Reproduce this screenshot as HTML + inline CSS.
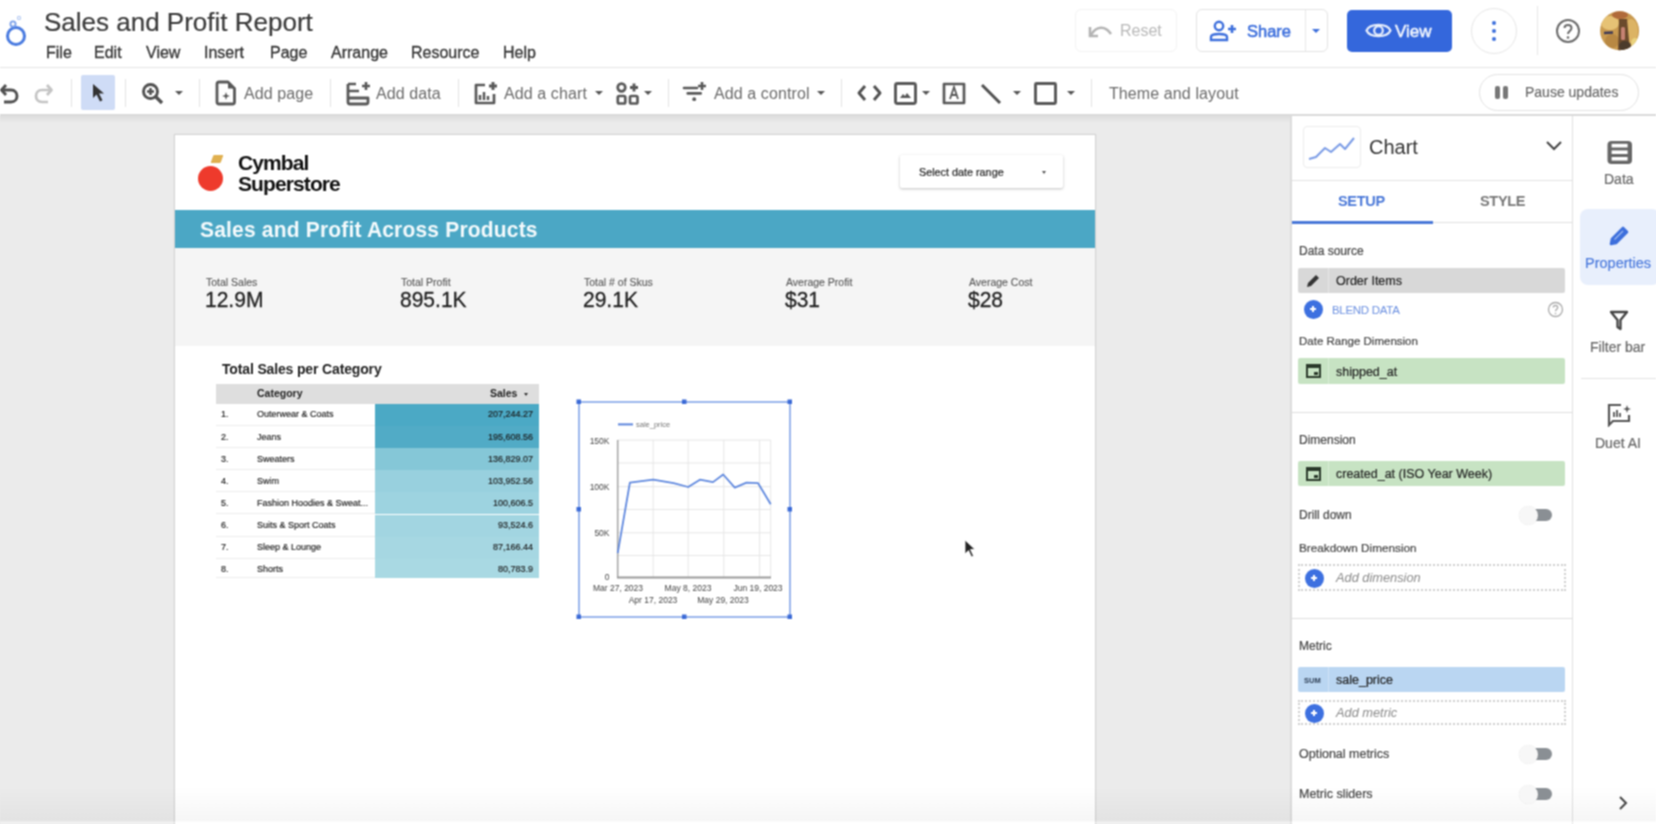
<!DOCTYPE html>
<html><head><meta charset="utf-8">
<style>
*{box-sizing:border-box;margin:0;padding:0}
html,body{width:1656px;height:824px;overflow:hidden;background:#fff;font-family:"Liberation Sans",sans-serif;color:#3c4043}
.a{position:absolute;white-space:nowrap}
#hdr{position:absolute;left:0;top:0;width:1656px;height:68px;background:#fff;border-bottom:1px solid #e4e4e4}
#tb{position:absolute;left:0;top:68px;width:1656px;height:48px;background:#fff;border-bottom:2px solid #dadada}
#canvas{position:absolute;left:-20px;top:116px;width:1310px;height:740px;background:#ebebeb}
#page{position:absolute;left:175px;top:135px;width:920px;height:700px;background:#fff;box-shadow:0 0 1px 1px rgba(0,0,0,.1)}
#panel{position:absolute;left:1290px;top:116px;width:283px;height:740px;background:#fff;border-left:2px solid #dcdcdc;border-right:1px solid #e0e0e0}
#rail{position:absolute;left:1573px;top:116px;width:103px;height:740px;background:#fff}
.menu{font-size:16px;color:#333;top:44px;-webkit-text-stroke:0.3px #333}
.tbt{font-size:16px;color:#6a6a6a;top:85px;letter-spacing:0.1px}
.sl{font-size:10.5px;color:#555;top:275.5px;-webkit-text-stroke:0.1px #555}
.sv{font-size:22px;color:#222;top:287.3px;transform:scaleX(0.955);transform-origin:0 0;-webkit-text-stroke:0.3px #222}
.tr{font-size:9px;color:#1a1a1a;-webkit-text-stroke:0.15px #1a1a1a}
.pl{color:#444;-webkit-text-stroke:0.2px #444}
.pv{font-size:12.5px;color:#1f1f1f;-webkit-text-stroke:0.2px #1f1f1f}
.rl{font-size:14px;color:#666;-webkit-text-stroke:0.2px #666}
.sep{position:absolute;width:1px;background:#e3e3e3;top:79px;height:28px}
</style></head><body><svg width="0" height="0" style="position:absolute"><filter id="sb" color-interpolation-filters="sRGB" x="-1%" y="-1%" width="102%" height="102%"><feConvolveMatrix order="3" kernelMatrix="1 2 1 2 4 2 1 2 1" divisor="16" edgeMode="duplicate"/></filter></svg><div id="root" style="position:absolute;left:-20px;top:-20px;width:1696px;height:864px;filter:url(#sb)"><div style="position:absolute;left:20px;top:20px;width:1656px;height:824px">
<div id="hdr"></div>
<div id="tb"></div>
<div id="canvas"></div>
<div id="page"></div>
<div id="panel"></div>
<div class="a" style="left:0;top:116px;width:1290px;height:7px;background:linear-gradient(rgba(0,0,0,.06),rgba(0,0,0,0))"></div>
<div id="rail"></div>
<div class="a" style="left:0;top:786px;width:1656px;height:38px;background:linear-gradient(rgba(0,0,0,0),rgba(0,0,0,.035) 90%,rgba(255,255,255,.3) 96%)"></div>

<!-- header -->
<div class="a" style="left:44px;top:7px;font-size:26px;color:#3a3a3a;-webkit-text-stroke:0.2px #3a3a3a">Sales and Profit Report</div>
<div class="a menu" style="left:46px">File</div>
<div class="a menu" style="left:94px">Edit</div>
<div class="a menu" style="left:146px">View</div>
<div class="a menu" style="left:204px">Insert</div>
<div class="a menu" style="left:270px">Page</div>
<div class="a menu" style="left:331px">Arrange</div>
<div class="a menu" style="left:411px">Resource</div>
<div class="a menu" style="left:503px">Help</div>


<!-- logo -->
<svg class="a" style="left:4px;top:14px" width="26" height="36" viewBox="0 0 26 36">
 <circle cx="12" cy="22" r="8.5" fill="none" stroke="#4a7be0" stroke-width="3"/>
 <circle cx="9" cy="10" r="2.6" fill="none" stroke="#7aa0ea" stroke-width="1.8"/>
 <circle cx="15" cy="4" r="1.6" fill="none" stroke="#b9cdf2" stroke-width="1.2"/>
</svg>
<!-- reset -->
<div class="a" style="left:1075px;top:9px;width:102px;height:43px;border:1px solid #f3f3f3;border-radius:6px"></div>
<svg class="a" style="left:1088px;top:22px" width="26" height="16" viewBox="0 0 26 16">
 <path d="M3 13 C8 4 17 3 23 12" fill="none" stroke="#b4b4b4" stroke-width="2.6"/>
 <path d="M2 5 L2 14 L10 14" fill="none" stroke="#b4b4b4" stroke-width="2.6"/>
</svg>
<div class="a" style="left:1120px;top:22px;font-size:16px;color:#b8b8b8">Reset</div>
<!-- share -->
<div class="a" style="left:1196px;top:9px;width:132px;height:43px;border:1px solid #e3e3e3;border-radius:6px"></div>
<div class="a" style="left:1305px;top:10px;width:1px;height:41px;background:#e8e8e8"></div>
<svg class="a" style="left:1209px;top:20px" width="28" height="22" viewBox="0 0 28 22">
 <circle cx="10" cy="6" r="4.2" fill="none" stroke="#3d6fdc" stroke-width="2.4"/>
 <path d="M2 20 L2 17 C2 13 18 13 18 17 L18 20 Z" fill="none" stroke="#3d6fdc" stroke-width="2.4"/>
 <path d="M19 9 H27 M23 5 V13" stroke="#3d6fdc" stroke-width="2.6"/>
</svg>
<div class="a" style="left:1247px;top:22px;font-size:16.5px;color:#3d6fdc;-webkit-text-stroke:0.55px #3d6fdc">Share</div>
<div class="a" style="left:1312px;top:29px;width:0;height:0;border-left:4px solid transparent;border-right:4px solid transparent;border-top:4px solid #3d6fdc"></div>
<!-- view -->
<div class="a" style="left:1347px;top:10px;width:105px;height:42px;background:#3467dc;border-radius:5px"></div>
<svg class="a" style="left:1365px;top:20px" width="27" height="21" viewBox="0 0 27 21">
 <path d="M1.5 10.5 C5 3 22 3 25.5 10.5 C22 18 5 18 1.5 10.5 Z" fill="none" stroke="#e6edfb" stroke-width="2.2"/>
 <circle cx="13.5" cy="10.5" r="4.3" fill="none" stroke="#e6edfb" stroke-width="2.2"/>
</svg>
<div class="a" style="left:1395px;top:22px;font-size:17px;color:#eef3fd;-webkit-text-stroke:0.55px #eef3fd">View</div>
<!-- more -->
<div class="a" style="left:1471px;top:8px;width:46px;height:46px;border:1px solid #e6e6e6;border-radius:50%"></div>
<div class="a" style="left:1492px;top:21px;width:4px;height:4px;border-radius:2px;background:#3d6fdc"></div>
<div class="a" style="left:1492px;top:29px;width:4px;height:4px;border-radius:2px;background:#3d6fdc"></div>
<div class="a" style="left:1492px;top:37px;width:4px;height:4px;border-radius:2px;background:#3d6fdc"></div>
<div class="a" style="left:1537px;top:6px;width:1px;height:49px;background:#e6e6e6"></div>
<!-- help -->
<svg class="a" style="left:1555px;top:18px" width="26" height="26" viewBox="0 0 26 26">
 <circle cx="13" cy="13" r="11" fill="none" stroke="#6a6a6a" stroke-width="2"/>
 <path d="M9.5 10 C9.5 6 16.5 6 16.5 10 C16.5 13 13 13 13 16" fill="none" stroke="#6a6a6a" stroke-width="2"/>
 <circle cx="13" cy="19.5" r="1.3" fill="#6a6a6a"/>
</svg>
<!-- avatar -->
<svg class="a" style="left:1600px;top:11px" width="40" height="40" viewBox="0 0 40 40">
 <defs><clipPath id="avc"><circle cx="19.6" cy="19.8" r="19.5"/></clipPath></defs>
 <g clip-path="url(#avc)">
  <rect width="40" height="40" fill="#c99a50"/>
  <ellipse cx="10" cy="12" rx="9" ry="7" fill="#e6c275"/>
  <ellipse cx="31" cy="20" rx="7" ry="12" fill="#dcb364"/>
  <ellipse cx="12" cy="30" rx="7" ry="7" fill="#b88843"/>
  <ellipse cx="20" cy="4" rx="8" ry="4" fill="#b06a3a"/>
  <path d="M19 8 L27 8 L30 40 L18 40 Z" fill="#6b4a2c"/>
  <rect x="21" y="16" width="4" height="13" rx="1.5" fill="#c58272"/>
  <path d="M4 22 L13 21.5" stroke="#3f3a55" stroke-width="2.6"/>
  <ellipse cx="25" cy="35" rx="6" ry="5" fill="#4b3b2b"/>
  <ellipse cx="35" cy="32" rx="4" ry="5" fill="#e9d27e"/>
 </g>
</svg>
<!-- toolbar -->
<svg class="a" style="left:0px;top:82px" width="20" height="22" viewBox="0 0 20 22">
 <path d="M2 8 H11 C15 8 17 11 17 14 C17 17 15 20 11 20 H4" fill="none" stroke="#505050" stroke-width="2.9" stroke-linejoin="round"/>
 <path d="M6 3 L1.5 8 L6 13" fill="none" stroke="#505050" stroke-width="2.9" stroke-linejoin="round"/>
</svg>
<svg class="a" style="left:32px;top:82px" width="22" height="22" viewBox="0 0 22 22">
 <path d="M19 8 H10 C6 8 4 11 4 14 C4 17 6 20 10 20 H16" fill="none" stroke="#c4c4c4" stroke-width="2.7" stroke-linejoin="round"/>
 <path d="M15 3 L19.5 8 L15 13" fill="none" stroke="#c4c4c4" stroke-width="2.7" stroke-linejoin="round"/>
</svg>
<div class="sep" style="left:71px"></div>
<div class="a" style="left:81px;top:75px;width:34px;height:35px;background:#cfdcf6;border-radius:2px"></div>
<svg class="a" style="left:91px;top:83px" width="16" height="20" viewBox="0 0 16 20">
 <path d="M2 1 L2 15 L5.5 11.5 L9 18.5 L11.5 17.3 L8 10.5 L13 10.5 Z" fill="#333"/>
</svg>
<div class="sep" style="left:125px"></div>
<svg class="a" style="left:141px;top:82px" width="24" height="24" viewBox="0 0 24 24">
 <circle cx="9.5" cy="9.5" r="7" fill="none" stroke="#505050" stroke-width="2.9" stroke-linejoin="round"/>
 <path d="M14.5 14.5 L21 21" stroke="#505050" stroke-width="3.3" stroke-linejoin="round"/>
 <path d="M6 9.5 H13 M9.5 6 V13" stroke="#505050" stroke-width="2.5" stroke-linejoin="round"/>
</svg>
<div class="a" style="left:175px;top:91px;border-left:4px solid transparent;border-right:4px solid transparent;border-top:4px solid #555"></div>
<div class="sep" style="left:199px"></div>
<svg class="a" style="left:215px;top:80px" width="22" height="26" viewBox="0 0 22 26">
 <path d="M4 2 H13 L19.5 8.5 V22 Q19.5 24 17.5 24 H4 Q2 24 2 22 V4 Q2 2 4 2 Z" fill="none" stroke="#585858" stroke-width="2.8" stroke-linejoin="round"/>
 <path d="M13 2 L19.5 8.5 L13 8.5 Z" fill="#585858"/>
 <path d="M11 12 L12 15 L15 16 L12 17 L11 20 L10 17 L7 16 L10 15 Z" fill="#585858"/>
</svg>
<div class="a tbt" style="left:244px">Add page</div>
<div class="sep" style="left:330px"></div>
<svg class="a" style="left:345px;top:80px" width="26" height="26" viewBox="0 0 26 26">
 <path d="M3 4 V22 Q3 24 5 24 H21 Q23 24 23 22 V18 H3" fill="none" stroke="#585858" stroke-width="2.8" stroke-linejoin="round"/>
 <path d="M3 4 H11 M3 11 H14" stroke="#585858" stroke-width="2.6"/>
 <path d="M17 6 H25 M21 2 V10" stroke="#585858" stroke-width="2.6"/>
</svg>
<div class="a tbt" style="left:376px">Add data</div>
<div class="sep" style="left:458px"></div>
<svg class="a" style="left:473px;top:80px" width="26" height="26" viewBox="0 0 26 26">
 <path d="M12 5 H3 V23 H21 V14" fill="none" stroke="#585858" stroke-width="2.7" stroke-linejoin="round"/>
 <path d="M7 20 V15 M11 20 V12 M15 20 V16" stroke="#585858" stroke-width="2.5" stroke-linejoin="round"/>
 <path d="M16 6 H24 M20 2 V10" stroke="#585858" stroke-width="2.9" stroke-linejoin="round"/>
</svg>
<div class="a tbt" style="left:504px">Add a chart</div>
<div class="a" style="left:595px;top:91px;border-left:4px solid transparent;border-right:4px solid transparent;border-top:4px solid #555"></div>
<svg class="a" style="left:616px;top:82px" width="24" height="23" viewBox="0 0 24 23">
 <circle cx="5.5" cy="5.5" r="3.8" fill="none" stroke="#585858" stroke-width="2.7" stroke-linejoin="round"/>
 <path d="M14 5.5 H22 M18 1.5 V9.5" stroke="#585858" stroke-width="2.9" stroke-linejoin="round"/>
 <rect x="1.8" y="14" width="7.5" height="7.5" rx="1.5" fill="none" stroke="#585858" stroke-width="2.7" stroke-linejoin="round"/>
 <rect x="14" y="14" width="7.5" height="7.5" rx="1.5" fill="none" stroke="#585858" stroke-width="2.7" stroke-linejoin="round"/>
</svg>
<div class="a" style="left:644px;top:91px;border-left:4px solid transparent;border-right:4px solid transparent;border-top:4px solid #555"></div>
<div class="sep" style="left:668px"></div>
<svg class="a" style="left:682px;top:80px" width="28" height="24" viewBox="0 0 28 24">
 <path d="M2 8 H15 M5.7 13.4 H18.7" stroke="#585858" stroke-width="2.6" stroke-linecap="round"/>
 <path d="M16 6 H24 M20 2 V10" stroke="#585858" stroke-width="2.6"/>
 <circle cx="12.2" cy="19.2" r="1.9" fill="#585858"/>
</svg>
<div class="a tbt" style="left:714px">Add a control</div>
<div class="a" style="left:817px;top:91px;border-left:4px solid transparent;border-right:4px solid transparent;border-top:4px solid #555"></div>
<div class="sep" style="left:841px"></div>
<svg class="a" style="left:857px;top:84px" width="25" height="18" viewBox="0 0 25 18">
 <path d="M8 2 L2 9 L8 16 M17 2 L23 9 L17 16" fill="none" stroke="#505050" stroke-width="2.9" stroke-linejoin="round"/>
</svg>
<svg class="a" style="left:894px;top:82px" width="23" height="23" viewBox="0 0 23 23">
 <rect x="1.5" y="1.5" width="20" height="20" rx="2" fill="none" stroke="#585858" stroke-width="2.9" stroke-linejoin="round"/>
 <path d="M6 16 L9 12 L11 14 L13 11 L17 16 Z" fill="#585858"/>
</svg>
<div class="a" style="left:922px;top:91px;border-left:4px solid transparent;border-right:4px solid transparent;border-top:4px solid #555"></div>
<svg class="a" style="left:942px;top:82px" width="24" height="23" viewBox="0 0 24 23">
 <rect x="2" y="2" width="20" height="19" fill="none" stroke="#585858" stroke-width="2.7" stroke-linejoin="round"/>
 <path d="M8 17 L12 5 L16 17 M9.5 13 H14.5" fill="none" stroke="#585858" stroke-width="1.8"/>
</svg>
<svg class="a" style="left:979px;top:82px" width="24" height="24" viewBox="0 0 24 24">
 <path d="M3 3 L21 21" stroke="#505050" stroke-width="3"/>
</svg>
<div class="a" style="left:1013px;top:91px;border-left:4px solid transparent;border-right:4px solid transparent;border-top:4px solid #555"></div>
<svg class="a" style="left:1034px;top:82px" width="23" height="23" viewBox="0 0 23 23">
 <rect x="1.5" y="1.5" width="20" height="20" rx="1" fill="none" stroke="#585858" stroke-width="2.9" stroke-linejoin="round"/>
</svg>
<div class="a" style="left:1067px;top:91px;border-left:4px solid transparent;border-right:4px solid transparent;border-top:4px solid #555"></div>
<div class="sep" style="left:1091px"></div>
<div class="a tbt" style="left:1109px">Theme and layout</div>
<div class="a" style="left:1479px;top:74px;width:160px;height:37px;border:1px solid #e2e2e2;border-radius:19px"></div>
<div class="a" style="left:1495px;top:86px;width:5px;height:13px;background:#777;border-radius:2px"></div>
<div class="a" style="left:1503px;top:86px;width:5px;height:13px;background:#777;border-radius:2px"></div>
<div class="a" style="left:1525px;top:84px;font-size:14px;color:#666;-webkit-text-stroke:0.15px #666">Pause updates</div>


<!-- page content -->
<div class="a" style="left:212px;top:155px;width:10px;height:8px;background:#e0b050;transform:skewX(-20deg);border-radius:1px"></div>
<div class="a" style="left:198px;top:166px;width:25px;height:25px;border-radius:50%;background:#ee3a2c"></div>
<div class="a" style="left:238px;top:153px;font-size:21px;font-weight:bold;color:#111;letter-spacing:-0.9px;line-height:20.5px">Cymbal<br>Superstore</div>
<div class="a" style="left:900px;top:155px;width:163px;height:33px;background:#fff;box-shadow:0 1px 3px rgba(0,0,0,.25);border-radius:2px"></div>
<div class="a" style="left:919px;top:165.5px;font-size:10.8px;color:#222;-webkit-text-stroke:0.2px #222">Select date range</div>
<div class="a" style="left:1042px;top:171px;border-left:2.5px solid transparent;border-right:2.5px solid transparent;border-top:3px solid #555"></div>
<div class="a" style="left:175px;top:209.8px;width:920px;height:38.6px;background:#4ba7c5"></div>
<div class="a" style="left:200px;top:216.7px;font-size:22.5px;font-weight:bold;color:#f4fafc;letter-spacing:0.2px;transform:scaleX(0.933);transform-origin:0 0">Sales and Profit Across Products</div>
<div class="a" style="left:175px;top:248px;width:920px;height:98px;background:#f5f5f5"></div>
<div class="a sl" style="left:206px">Total Sales</div>
<div class="a sv" style="left:205px">12.9M</div>
<div class="a sl" style="left:401px">Total Profit</div>
<div class="a sv" style="left:400px">895.1K</div>
<div class="a sl" style="left:584px">Total # of Skus</div>
<div class="a sv" style="left:583px">29.1K</div>
<div class="a sl" style="left:786px">Average Profit</div>
<div class="a sv" style="left:785px">$31</div>
<div class="a sl" style="left:969px">Average Cost</div>
<div class="a sv" style="left:968px">$28</div>

<div class="a" style="left:222px;top:361px;font-size:14px;font-weight:bold;color:#222;letter-spacing:-0.15px">Total Sales per Category</div>
<div class="a" style="left:216px;top:384px;width:323px;height:20px;background:#dedede"></div>
<div class="a" style="left:257px;top:387px;font-size:10.5px;font-weight:bold;color:#222">Category</div>
<div class="a" style="left:490px;top:387px;font-size:10.5px;font-weight:bold;color:#222">Sales</div>
<div class="a" style="left:524px;top:393px;border-left:2px solid transparent;border-right:2px solid transparent;border-top:3px solid #333"></div>
<div class="a" style="left:216px;top:404.00px;width:323px;height:22.10px;border-bottom:1px solid #ececec"></div>
<div class="a" style="left:375px;top:404.00px;width:164px;height:22.10px;background:#4ba9c5"></div>
<div class="a tr" style="left:221px;top:409.40px">1.</div>
<div class="a tr" style="left:257px;top:409.40px">Outerwear &amp; Coats</div>
<div class="a tr" style="right:1123px;top:409.40px">207,244.27</div>
<div class="a" style="left:216px;top:426.10px;width:323px;height:22.10px;border-bottom:1px solid #ececec"></div>
<div class="a" style="left:375px;top:426.10px;width:164px;height:22.10px;background:#51abc6"></div>
<div class="a tr" style="left:221px;top:431.50px">2.</div>
<div class="a tr" style="left:257px;top:431.50px">Jeans</div>
<div class="a tr" style="right:1123px;top:431.50px">195,608.56</div>
<div class="a" style="left:216px;top:448.20px;width:323px;height:22.10px;border-bottom:1px solid #ececec"></div>
<div class="a" style="left:375px;top:448.20px;width:164px;height:22.10px;background:#85c7d7"></div>
<div class="a tr" style="left:221px;top:453.60px">3.</div>
<div class="a tr" style="left:257px;top:453.60px">Sweaters</div>
<div class="a tr" style="right:1123px;top:453.60px">136,829.07</div>
<div class="a" style="left:216px;top:470.30px;width:323px;height:22.10px;border-bottom:1px solid #ececec"></div>
<div class="a" style="left:375px;top:470.30px;width:164px;height:22.10px;background:#98d0de"></div>
<div class="a tr" style="left:221px;top:475.70px">4.</div>
<div class="a tr" style="left:257px;top:475.70px">Swim</div>
<div class="a tr" style="right:1123px;top:475.70px">103,952.56</div>
<div class="a" style="left:216px;top:492.40px;width:323px;height:22.10px;border-bottom:1px solid #ececec"></div>
<div class="a" style="left:375px;top:492.40px;width:164px;height:22.10px;background:#9dd3e0"></div>
<div class="a tr" style="left:221px;top:497.80px">5.</div>
<div class="a tr" style="left:257px;top:497.80px">Fashion Hoodies &amp; Sweat...</div>
<div class="a tr" style="right:1123px;top:497.80px">100,606.5</div>
<div class="a" style="left:216px;top:514.50px;width:323px;height:22.10px;border-bottom:1px solid #ececec"></div>
<div class="a" style="left:375px;top:514.50px;width:164px;height:22.10px;background:#a2d5e1"></div>
<div class="a tr" style="left:221px;top:519.90px">6.</div>
<div class="a tr" style="left:257px;top:519.90px">Suits &amp; Sport Coats</div>
<div class="a tr" style="right:1123px;top:519.90px">93,524.6</div>
<div class="a" style="left:216px;top:536.60px;width:323px;height:22.10px;border-bottom:1px solid #ececec"></div>
<div class="a" style="left:375px;top:536.60px;width:164px;height:22.10px;background:#a6d7e2"></div>
<div class="a tr" style="left:221px;top:542.00px">7.</div>
<div class="a tr" style="left:257px;top:542.00px">Sleep &amp; Lounge</div>
<div class="a tr" style="right:1123px;top:542.00px">87,166.44</div>
<div class="a" style="left:216px;top:558.70px;width:323px;height:19.50px;border-bottom:1px solid #ececec"></div>
<div class="a" style="left:375px;top:558.70px;width:164px;height:19.50px;background:#a9d9e3"></div>
<div class="a tr" style="left:221px;top:564.10px">8.</div>
<div class="a tr" style="left:257px;top:564.10px">Shorts</div>
<div class="a tr" style="right:1123px;top:564.10px">80,783.9</div>

<!-- line chart -->
<svg class="a" style="left:0;top:0" width="1656" height="824" viewBox="0 0 1656 824">
 <line x1="617.7" x2="770.7" y1="440.1" y2="440.1" stroke="#e6e6e6" stroke-width="1"/><line x1="617.7" x2="770.7" y1="463.0" y2="463.0" stroke="#e6e6e6" stroke-width="1"/><line x1="617.7" x2="770.7" y1="486.7" y2="486.7" stroke="#e6e6e6" stroke-width="1"/><line x1="617.7" x2="770.7" y1="509.5" y2="509.5" stroke="#e6e6e6" stroke-width="1"/><line x1="617.7" x2="770.7" y1="532.8" y2="532.8" stroke="#e6e6e6" stroke-width="1"/><line x1="617.7" x2="770.7" y1="555.5" y2="555.5" stroke="#e6e6e6" stroke-width="1"/><line x1="653.2" x2="653.2" y1="440" y2="577" stroke="#e6e6e6" stroke-width="1"/><line x1="688.2" x2="688.2" y1="440" y2="577" stroke="#e6e6e6" stroke-width="1"/><line x1="723.8" x2="723.8" y1="440" y2="577" stroke="#e6e6e6" stroke-width="1"/><line x1="759.6" x2="759.6" y1="440" y2="577" stroke="#e6e6e6" stroke-width="1"/><line x1="770.7" x2="770.7" y1="440" y2="577" stroke="#e6e6e6" stroke-width="1"/>
 <line x1="617.7" x2="617.7" y1="440" y2="578" stroke="#a8a8a8" stroke-width="1.6"/>
 <line x1="617" x2="771" y1="577.5" y2="577.5" stroke="#999" stroke-width="2"/>
 <line x1="618" x2="633" y1="424.4" y2="424.4" stroke="#5b84dc" stroke-width="2"/>
 <text x="636" y="427" font-size="7.5" fill="#777" font-family="Liberation Sans">sale_price</text>
 <g font-size="8.5" fill="#444" font-family="Liberation Sans" text-anchor="end">
  <text x="609.5" y="443.5">150K</text><text x="609.5" y="489.5">100K</text><text x="609.5" y="535.5">50K</text><text x="609.5" y="580">0</text>
 </g>
 <g font-size="8.5" fill="#444" font-family="Liberation Sans" text-anchor="middle">
  <text x="618" y="591">Mar 27, 2023</text><text x="688" y="591">May 8, 2023</text><text x="758" y="591">Jun 19, 2023</text>
  <text x="653" y="603">Apr 17, 2023</text><text x="723" y="603">May 29, 2023</text>
 </g>
 <polyline points="617.7,553.2 629.9,482.7 653.2,479.7 673.6,483.2 688.2,487.0 699.9,479.7 713.0,482.1 723.2,474.5 734.8,487.6 746.5,482.7 758.1,483.2 770.7,504.2" fill="none" stroke="#5f88de" stroke-width="1.8" stroke-linejoin="round"/>
 <rect x="579" y="402" width="211" height="215" fill="none" stroke="#7a9de6" stroke-width="1.5"/>
 <g fill="#3b6ad6">
  <rect x="576.5" y="399.5" width="4.5" height="4.5"/><rect x="682" y="399.5" width="4.5" height="4.5"/><rect x="787.5" y="399.5" width="4.5" height="4.5"/>
  <rect x="576.5" y="507" width="4.5" height="4.5"/><rect x="787.5" y="507" width="4.5" height="4.5"/>
  <rect x="576.5" y="614.5" width="4.5" height="4.5"/><rect x="682" y="614.5" width="4.5" height="4.5"/><rect x="787.5" y="614.5" width="4.5" height="4.5"/>
 </g>
 <path d="M965 540 L965 554 L968.5 550.5 L971.5 557 L973.5 556 L970.5 549.5 L975 549.5 Z" fill="#222" stroke="#fff" stroke-width="0.8"/>
</svg>


<!-- right panel -->
<div class="a" style="left:1303px;top:126px;width:58px;height:42px;border:1px solid #ececec;border-radius:4px;background:#fff"></div>
<svg class="a" style="left:1306px;top:135px" width="54" height="28" viewBox="0 0 54 28">
 <polyline points="3,24 10,22 19,13 25,17 34,9 39,14 48,3" fill="none" stroke="#7b9ce6" stroke-width="2" stroke-linejoin="round"/>
</svg>
<div class="a" style="left:1369px;top:136px;font-size:20px;color:#333">Chart</div>
<svg class="a" style="left:1545px;top:140px" width="18" height="12" viewBox="0 0 18 12"><path d="M2 2 L9 9 L16 2" fill="none" stroke="#444" stroke-width="2"/></svg>
<div class="a" style="left:1292px;top:180px;width:280px;height:1px;background:#e2e2e2"></div>
<div class="a" style="left:1338px;top:193px;font-size:14.5px;font-weight:bold;color:#4a78d8;letter-spacing:-0.3px">SETUP</div>
<div class="a" style="left:1480px;top:193px;font-size:14.5px;font-weight:bold;color:#777;letter-spacing:-0.3px">STYLE</div>
<div class="a" style="left:1292px;top:222px;width:280px;height:1px;background:#e0e0e0"></div>
<div class="a" style="left:1292px;top:221px;width:141px;height:3px;background:#4a78d8"></div>
<div class="a pl" style="left:1299px;top:244px;font-size:12px">Data source</div>
<div class="a" style="left:1298px;top:268px;width:267px;height:25px;background:#d8d8d8;border-radius:2px"></div>
<div class="a" style="left:1328px;top:268px;width:1px;height:25px;background:#e6e6e6"></div>
<svg class="a" style="left:1304px;top:272px" width="18" height="18" viewBox="0 0 18 18"><path d="M3 15 L4 11 L12 3 L15 6 L7 14 Z" fill="#333"/></svg>
<div class="a pv" style="left:1336px;top:274px">Order Items</div>
<div class="a" style="left:1303.5px;top:299.5px;width:19px;height:19px;border-radius:50%;background:#3d70e0"></div>
<div class="a" style="left:1310.0px;top:308.25px;width:6px;height:1.5px;background:#fff"></div><div class="a" style="left:1312.25px;top:306.0px;width:1.5px;height:6px;background:#fff"></div>
<div class="a" style="left:1332px;top:304px;font-size:11.5px;color:#6a8fe0;letter-spacing:-0.3px">BLEND DATA</div>
<svg class="a" style="left:1547px;top:301px" width="17" height="17" viewBox="0 0 17 17"><circle cx="8.5" cy="8.5" r="7" fill="none" stroke="#aaa" stroke-width="1.3"/><path d="M6.3 6.5 C6.3 3.8 10.7 3.8 10.7 6.5 C10.7 8.3 8.5 8.3 8.5 10.3" fill="none" stroke="#aaa" stroke-width="1.3"/><circle cx="8.5" cy="12.5" r=".8" fill="#aaa"/></svg>
<div class="a pl" style="left:1299px;top:335px;font-size:11.5px">Date Range Dimension</div>
<div class="a" style="left:1298px;top:358px;width:267px;height:26px;background:#c7e3c3;border-radius:2px"></div>
<div class="a" style="left:1328px;top:358px;width:1px;height:26px;background:#d8ecd5"></div>
<svg class="a" style="left:1305px;top:362px" width="17" height="17" viewBox="0 0 17 17">
 <rect x="2" y="3" width="13" height="12" fill="none" stroke="#2b3a2b" stroke-width="2"/><rect x="2" y="3" width="13" height="3" fill="#2b3a2b"/>
 <rect x="9" y="10" width="4" height="3" fill="#2b3a2b"/></svg>
<div class="a pv" style="left:1336px;top:365px">shipped_at</div>
<div class="a" style="left:1292px;top:412px;width:280px;height:1px;background:#dedede"></div>
<div class="a pl" style="left:1299px;top:433px;font-size:12px">Dimension</div>
<div class="a" style="left:1298px;top:461px;width:267px;height:25px;background:#c7e3c3;border-radius:2px"></div>
<div class="a" style="left:1328px;top:461px;width:1px;height:25px;background:#d8ecd5"></div>
<svg class="a" style="left:1305px;top:465px" width="17" height="17" viewBox="0 0 17 17">
 <rect x="2" y="3" width="13" height="12" fill="none" stroke="#2b3a2b" stroke-width="2"/><rect x="2" y="3" width="13" height="3" fill="#2b3a2b"/>
 <rect x="9" y="10" width="4" height="3" fill="#2b3a2b"/></svg>
<div class="a pv" style="left:1336px;top:467px">created_at (ISO Year Week)</div>
<div class="a pl" style="left:1299px;top:508px;font-size:12px">Drill down</div>
<div class="a" style="left:1528px;top:509px;width:24px;height:12px;border-radius:6px;background:#8a8f94"></div>
<div class="a" style="left:1519px;top:506px;width:19px;height:19px;border-radius:50%;background:#f7f7f7;box-shadow:0 0 1px rgba(0,0,0,.12)"></div>
<div class="a pl" style="left:1299px;top:541px;font-size:11.75px">Breakdown Dimension</div>
<div class="a" style="left:1298px;top:564px;width:268px;height:27px;border:2px dotted #cfcfcf"></div>
<div class="a" style="left:1304.5px;top:568.5px;width:19px;height:19px;border-radius:50%;background:#3d70e0"></div>
<div class="a" style="left:1311.0px;top:577.25px;width:6px;height:1.5px;background:#fff"></div><div class="a" style="left:1313.25px;top:575.0px;width:1.5px;height:6px;background:#fff"></div>
<div class="a" style="left:1336px;top:570px;font-size:12.8px;color:#8a8a8a;font-style:italic">Add dimension</div>
<div class="a" style="left:1292px;top:618px;width:280px;height:1px;background:#dedede"></div>
<div class="a pl" style="left:1299px;top:639px;font-size:12px">Metric</div>
<div class="a" style="left:1298px;top:667px;width:267px;height:25px;background:#bad6f2;border-radius:2px"></div>
<div class="a" style="left:1328px;top:667px;width:1px;height:25px;background:#cfe2f6"></div>
<div class="a" style="left:1304px;top:676px;font-size:7.5px;font-weight:bold;color:#2f3f55">SUM</div>
<div class="a pv" style="left:1336px;top:673px">sale_price</div>
<div class="a" style="left:1298px;top:700px;width:268px;height:25px;border:2px dotted #cfcfcf"></div>
<div class="a" style="left:1304.5px;top:703.5px;width:19px;height:19px;border-radius:50%;background:#3d70e0"></div>
<div class="a" style="left:1311.0px;top:712.25px;width:6px;height:1.5px;background:#fff"></div><div class="a" style="left:1313.25px;top:710.0px;width:1.5px;height:6px;background:#fff"></div>
<div class="a" style="left:1336px;top:705px;font-size:12.8px;color:#8a8a8a;font-style:italic">Add metric</div>
<div class="a pl" style="left:1299px;top:747px;font-size:12.5px">Optional metrics</div>
<div class="a" style="left:1528px;top:748px;width:24px;height:12px;border-radius:6px;background:#8a8f94"></div>
<div class="a" style="left:1519px;top:745px;width:19px;height:19px;border-radius:50%;background:#f7f7f7;box-shadow:0 0 1px rgba(0,0,0,.12)"></div>
<div class="a pl" style="left:1299px;top:787px;font-size:12.5px">Metric sliders</div>
<div class="a" style="left:1528px;top:788px;width:24px;height:12px;border-radius:6px;background:#8a8f94"></div>
<div class="a" style="left:1519px;top:785px;width:19px;height:19px;border-radius:50%;background:#f7f7f7;box-shadow:0 0 1px rgba(0,0,0,.12)"></div>

<!-- rail -->
<svg class="a" style="left:1607px;top:140px" width="26" height="25" viewBox="0 0 26 25">
 <rect x="0.5" y="1" width="24.5" height="23" rx="4" fill="#666"/>
 <rect x="4.6" y="3.8" width="16" height="3.7" fill="#fff"/><rect x="4.6" y="10.4" width="16" height="3.6" fill="#fff"/><rect x="4.6" y="17" width="16" height="3.6" fill="#fff"/>
</svg>
<div class="a rl" style="left:1604px;top:171px">Data</div>
<div class="a" style="left:1580px;top:209px;width:80px;height:76px;background:#e8effc;border-radius:8px"></div>
<svg class="a" style="left:1608px;top:225px" width="22" height="22" viewBox="0 0 22 22"><path d="M3 19 L4 14 L15 3 L19 7 L8 18 Z" fill="#3d6fdc" stroke="#3d6fdc" stroke-width="2.6" stroke-linejoin="round"/><path d="M6.5 14.5 L15 6" stroke="#9db8ef" stroke-width="1.2"/></svg>
<div class="a rl" style="left:1585px;top:255px;color:#4a79dc;-webkit-text-stroke:0.2px #4a79dc;font-size:14.5px">Properties</div>
<svg class="a" style="left:1609px;top:310px" width="20" height="21" viewBox="0 0 20 21"><path d="M2 2 H18 L11.5 10 V19 L8.5 17 V10 Z" fill="none" stroke="#444" stroke-width="2.3" stroke-linejoin="round"/></svg>
<div class="a rl" style="left:1590px;top:339px">Filter bar</div>
<div class="a" style="left:1581px;top:378px;width:75px;height:1px;background:#e3e3e3"></div>
<svg class="a" style="left:1606px;top:403px" width="27" height="24" viewBox="0 0 27 24">
 <path d="M15 2 H3 V22 L7 18 H23 V12" fill="none" stroke="#555" stroke-width="2.2"/>
 <path d="M8 14 V9 M11 14 V7 M14 14 V10" stroke="#555" stroke-width="1.8"/>
 <path d="M21 2 L22 5 L25 6 L22 7 L21 10 L20 7 L17 6 L20 5 Z" fill="#555"/>
</svg>
<div class="a rl" style="left:1595px;top:435px">Duet AI</div>
<svg class="a" style="left:1617px;top:795px" width="12" height="16" viewBox="0 0 12 16"><path d="M3 2 L9 8 L3 14" fill="none" stroke="#444" stroke-width="2"/></svg>

</div></div></body></html>
